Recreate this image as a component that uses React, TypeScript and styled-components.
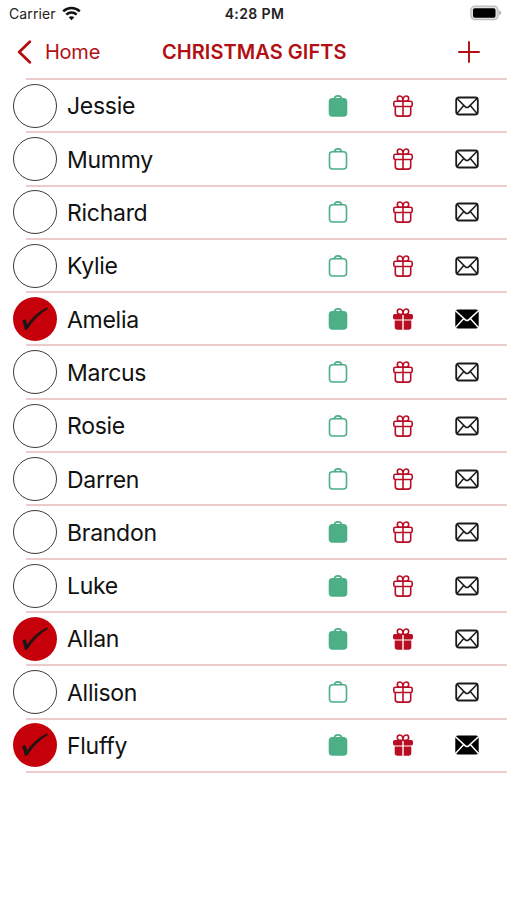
import React from "react";
import styled, { createGlobalStyle } from "styled-components";

const GlobalStyle = createGlobalStyle`
  * { box-sizing: border-box; }
  body { margin: 0; background: #fff; font-family: Inter, "Liberation Sans", sans-serif; }
`;

const RED = "#b20f14";
const GREEN = "#4caf86";
const CRIMSON = "#b90d24";
const RULE = "#edcbcc";

const Screen = styled.main`
  width: 507px;
  height: 900px;
  background: #fff;
  overflow: hidden;
`;

const StatusBar = styled.div`
  display: grid;
  grid-template-columns: 1fr auto 1fr;
  align-items: center;
  height: 27px;
  padding: 0 7px 0 9px;
  color: #222;
`;

const Carrier = styled.div`
  display: flex;
  align-items: center;
  gap: 6px;
  font-size: 14px;
  letter-spacing: 0.1px;
`;

const Clock = styled.div`
  font-size: 14px;
  font-weight: 600;
  letter-spacing: 0.4px;
`;

const BatterySlot = styled.div`
  display: flex;
  justify-content: flex-end;
  margin: -1px -2px 0 0;
`;

const NavBar = styled.header`
  display: grid;
  grid-template-columns: 145px auto 1fr;
  align-items: center;
  height: 51px;
  padding: 0 27px 1px 17px;
  color: ${RED};
`;

const BackButton = styled.button`
  display: flex;
  align-items: center;
  gap: 13px;
  padding: 0;
  border: 0;
  background: none;
  color: inherit;
  font: 400 20px Inter, sans-serif;
  letter-spacing: -0.25px;
`;

const Title = styled.h1`
  margin: 0;
  font-size: 20px;
  font-weight: 600;
  letter-spacing: 0.05px;
  white-space: nowrap;
`;

const AddButton = styled.button`
  display: flex;
  justify-self: end;
  margin-top: -1px;
  padding: 0;
  border: 0;
  background: none;
  color: inherit;
`;

const List = styled.ul`
  margin: 0;
  padding: 0;
  list-style: none;
`;

const Row = styled.li`
  display: grid;
  grid-template-columns: 44px 1fr auto;
  align-items: center;
  height: 53.31px;
  padding: 2.4px 28px 0 13px;
  background: linear-gradient(${RULE}, ${RULE}) 26px 0 / 100% 2px no-repeat;

  &:last-child {
    height: 55.31px;
    padding-bottom: 2px;
    background:
      linear-gradient(${RULE}, ${RULE}) 26px 0 / 100% 2px no-repeat,
      linear-gradient(${RULE}, ${RULE}) 26px 100% / 100% 2px no-repeat;
  }
`;

const Check = styled.span<{ $on: boolean }>`
  display: flex;
  align-items: center;
  justify-content: center;
  width: 44px;
  height: 44px;
  border-radius: 50%;
  border: ${(p) => (p.$on ? "0" : "1.3px solid #3a3a3a")};
  background: ${(p) => (p.$on ? "#c5000b" : "transparent")};
`;

const Name = styled.span`
  padding: 1.2px 0 0 10px;
  color: #111;
  font-size: 23px;
  letter-spacing: -0.28px;
`;

const Icons = styled.div`
  display: grid;
  grid-template-columns: 65px 62px 24px;
  align-items: center;

  svg { display: block; }
`;

const WifiIcon = () => (
  <svg width="19" height="15" viewBox="0 0 19 15" fill="none" stroke="#111" strokeWidth="2.5">
    <path d="M1.2 5.3C6 .8 13 .8 17.8 5.3" />
    <path d="M4.3 8.6c3-2.8 7.4-2.8 10.4 0" />
    <path d="M9.5 14.2 6.7 11.3c1.6-1.4 4-1.4 5.6 0z" fill="#111" stroke="none" />
  </svg>
);

const BatteryIcon = () => (
  <svg width="32" height="16" viewBox="0 0 32 16">
    <rect x=".9" y="1.2" width="27.2" height="13.4" rx="4" fill="#e0e0e0" stroke="#bcbcbc" strokeWidth="1.3" />
    <rect x="3" y="3.3" width="22.5" height="9.4" rx="1.8" fill="#000" />
    <path d="M29.3 5.6c2.4.6 2.4 4 0 4.6z" fill="#aaa" />
  </svg>
);

const BackIcon = () => (
  <svg width="15" height="24" viewBox="0 0 15 24" fill="none" stroke={RED} strokeWidth="2.8" strokeLinecap="round" strokeLinejoin="round">
    <path d="M12.8 1.8 2.2 12l10.6 10.2" />
  </svg>
);

const PlusIcon = () => (
  <svg width="22" height="22" viewBox="0 0 22 22" stroke={RED} strokeWidth="1.9" strokeLinecap="round">
    <path d="M11 1v20M1 11h20" />
  </svg>
);

const TickIcon = () => (
  <svg width="28" height="26" viewBox="0 0 28 26">
    <path d="M1.3 14.7C2.6 13 4.2 12.9 4.9 14.4L6.2 18.6C11.6 11.2 18 5 26.2 1.6L27.1 2.7C18.6 7.8 12.6 13.8 7.1 22.4L4 24.6C3.4 21 2.5 17.6 1.3 14.7Z" fill="#1c1512" />
  </svg>
);

const BagIcon = ({ filled }: { filled: boolean }) => (
  <svg width="20" height="22" viewBox="0 0 20 22" fill="none" stroke={GREEN} strokeWidth="1.6">
    <path d="M6.3 4.2C6.6-.2 13.4-.2 13.7 4.2" />
    <rect x="1.5" y="3.8" width="17" height="17.2" rx="3" fill={filled ? GREEN : "none"} />
  </svg>
);

const GiftIcon = ({ filled }: { filled: boolean }) => (
  <svg width="20" height="22" viewBox="0 0 20 22" fill="none" stroke={CRIMSON} strokeWidth="1.6" strokeLinejoin="round">
    <path d="M10 6.2H6.4C3.5 5.6 3.6 1 6.8 1 8.9 1 10 2.8 10 6.2ZM10 6.2h3.6C16.5 5.6 16.4 1 13.2 1 11.1 1 10 2.8 10 6.2Z" />
    {filled ? (
      <g fill={CRIMSON} stroke="none">
        <path d="M9.3 6v5.4H1.7A1.7 1.7 0 0 1 0 9.7v-2A1.7 1.7 0 0 1 1.7 6zM10.7 6v5.4h7.6A1.7 1.7 0 0 0 20 9.7v-2A1.7 1.7 0 0 0 18.3 6z" />
        <path d="M9.3 12.6v9.2H4.5a2.8 2.8 0 0 1-2.8-2.8v-6.4zM10.7 12.6v9.2h4.8a2.8 2.8 0 0 0 2.8-2.8v-6.4z" />
      </g>
    ) : (
      <>
        <rect x=".8" y="6.3" width="18.4" height="5.2" rx="1.6" />
        <path d="M2.3 11.5v7c0 1.7 1 2.6 2.7 2.6h10c1.7 0 2.7-.9 2.7-2.6v-7M10 6.3v14.8" />
      </>
    )}
  </svg>
);

const MailIcon = ({ filled }: { filled: boolean }) => (
  <svg width="24" height="20" viewBox="0 0 24 20" fill="none" strokeLinejoin="round">
    <rect x="1.2" y="1.5" width="21.6" height="17" rx={filled ? 1.8 : 2.5} fill={filled ? "#000" : "none"} stroke={filled ? "#000" : "#1b1b1b"} strokeWidth="1.8" />
    <path
      d={filled
        ? "m.3 1.5 9.8 9.1c1.3 1.3 2.5 1.3 3.8 0l9.8-9.1M.3 18.8l8.2-9M23.7 18.8l-8.2-9"
        : "m1.8 2.3 8.3 8.3c1.3 1.3 2.5 1.3 3.8 0l8.3-8.3M1.8 17.8l6.7-8M22.2 17.8l-6.7-8"}
      stroke={filled ? "#fff" : "#1b1b1b"}
      strokeWidth="1.5"
    />
  </svg>
);

type Person = { name: string; done?: boolean; bag?: boolean; gift?: boolean; mail?: boolean };

const people: Person[] = [
  { name: "Jessie", bag: true },
  { name: "Mummy" },
  { name: "Richard" },
  { name: "Kylie" },
  { name: "Amelia", done: true, bag: true, gift: true, mail: true },
  { name: "Marcus" },
  { name: "Rosie" },
  { name: "Darren" },
  { name: "Brandon", bag: true },
  { name: "Luke", bag: true },
  { name: "Allan", done: true, bag: true, gift: true },
  { name: "Allison" },
  { name: "Fluffy", done: true, bag: true, gift: true, mail: true },
];

export default function App() {
  return (
    <Screen>
      <GlobalStyle />
      <StatusBar>
        <Carrier>Carrier <WifiIcon /></Carrier>
        <Clock>4:28 PM</Clock>
        <BatterySlot><BatteryIcon /></BatterySlot>
      </StatusBar>
      <NavBar>
        <BackButton><BackIcon />Home</BackButton>
        <Title>CHRISTMAS GIFTS</Title>
        <AddButton aria-label="Add"><PlusIcon /></AddButton>
      </NavBar>
      <List>
        {people.map((p) => (
          <Row key={p.name}>
            <Check $on={!!p.done}>{p.done && <TickIcon />}</Check>
            <Name>{p.name}</Name>
            <Icons>
              <BagIcon filled={!!p.bag} />
              <GiftIcon filled={!!p.gift} />
              <MailIcon filled={!!p.mail} />
            </Icons>
          </Row>
        ))}
      </List>
    </Screen>
  );
}
